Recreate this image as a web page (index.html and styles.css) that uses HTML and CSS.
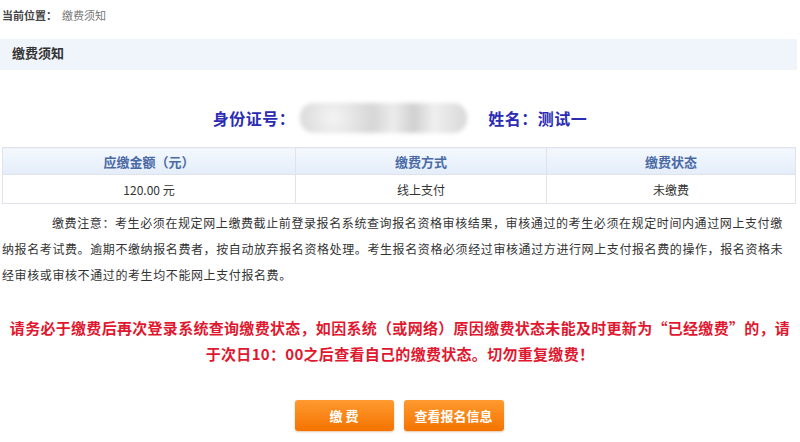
FILE: index.html
```html
<!DOCTYPE html>
<html lang="zh-CN">
<head>
<meta charset="utf-8">
<title>缴费须知</title>
<link rel="stylesheet" href="styles.css">
</head>
<body>
<div class="crumb"><span class="crumb-label">当前位置：</span><span class="crumb-cur">缴费须知</span></div>
<div class="titlebar">缴费须知</div>
<div class="idrow">
  <span class="id-label">身份证号：</span>
  <span class="blur"></span>
  <span class="id-name">姓名：测试一</span>
</div>
<table class="paytable">
  <thead>
    <tr><th class="c1">应缴金额（元）</th><th class="c2">缴费方式</th><th class="c3">缴费状态</th></tr>
  </thead>
  <tbody>
    <tr><td>120.00 元</td><td>线上支付</td><td>未缴费</td></tr>
  </tbody>
</table>
<p class="notice">缴费注意：考生必须在规定网上缴费截止前登录报名系统查询报名资格审核结果，审核通过的考生必须在规定时间内通过网上支付缴纳报名考试费。逾期不缴纳报名费者，按自动放弃报名资格处理。考生报名资格必须经过审核通过方进行网上支付报名费的操作，报名资格未经审核或审核不通过的考生均不能网上支付报名费。</p>
<p class="warn">请务必于缴费后再次登录系统查询缴费状态，如因系统（或网络）原因缴费状态未能及时更新为“已经缴费”的，请于次日10：00之后查看自己的缴费状态。切勿重复缴费！</p>
<div class="actions">
  <button class="btn btn-pay">缴 费</button>
  <button class="btn btn-info">查看报名信息</button>
</div>
</body>
</html>
```

FILE: styles.css
```css
html, body {
  margin: 0;
  padding: 0;
  background: #fff;
}
body {
  width: 800px;
  height: 442px;
  overflow: hidden;
  font-family: "Liberation Sans", "Noto Sans CJK SC", sans-serif;
  color: #333;
}
.crumb {
  height: 32px;
  line-height: 32px;
  padding-left: 2px;
  font-size: 11px;
}
.crumb-label {
  font-weight: bold;
  color: #444;
  margin-right: 5px;
}
.crumb-cur {
  color: #777;
}
.titlebar {
  margin-top: 7px;
  height: 30px;
  line-height: 30px;
  margin-right: 3px;
  background: #f0f5fc;
  padding-left: 12px;
  font-size: 13px;
  font-weight: bold;
  color: #333;
  border-bottom: 1px dotted #f3f3f3;
}
.idrow {
  margin-top: 32px;
  height: 31px;
  display: flex;
  justify-content: center;
  align-items: center;
  font-family: "Noto Sans CJK SC", sans-serif;
  font-size: 16px;
  font-weight: bold;
  color: #2b2bb3;
}
.id-label {
  letter-spacing: 0.5px;
}
.blur {
  display: block;
  width: 167px;
  height: 30px;
  margin: 0 21px 0 5px;
  border-radius: 14px;
  background: radial-gradient(circle at 20% 50%, #f4f4f4 0, #d6d6d6 30%, #ececec 45%, #d0d0d0 60%, #efefef 75%, #d8d8d8 100%);
  filter: blur(2px);
}
.id-name {
  letter-spacing: 0.5px;
}
.paytable {
  margin: 14px 0 0 2px;
  width: 794px;
  border-collapse: collapse;
  font-family: "Noto Sans CJK SC", sans-serif;
  font-size: 12px;
  table-layout: fixed;
}
.paytable th, .paytable td {
  border: 1px solid #e0e4ea;
  text-align: center;
  padding: 0;
}
.paytable th {
  height: 26px;
  font-size: 13px;
  font-weight: bold;
  color: #4a6aa6;
  background: linear-gradient(#f4f8fd, #e4edf9);
}
.paytable td {
  height: 28px;
  color: #333;
}
.c1 { width: 292px; }
.c2 { width: 250px; }
.notice {
  margin: 6px 0 0 2px;
  width: 790px;
  font-family: "Noto Sans CJK SC", sans-serif;
  font-size: 12px;
  letter-spacing: 0.6px;
  line-height: 26px;
  text-indent: 50px;
  color: #333;
}
.warn {
  margin: 27px auto 0;
  width: 790px;
  text-align: center;
  font-family: "Noto Sans CJK SC", sans-serif;
  font-size: 15px;
  letter-spacing: 0.3px;
  line-height: 26px;
  font-weight: bold;
  color: #e0182f;
}
.actions {
  margin-top: 33px;
  display: flex;
  justify-content: center;
  gap: 10px;
  padding-right: 2px;
}
.btn {
  height: 31px;
  border: none;
  border-radius: 3px;
  background: linear-gradient(#ff9a30, #f47300);
  box-shadow: 0 1px 2px rgba(180, 90, 0, 0.35);
  color: #fff;
  font-family: "Noto Sans CJK SC", sans-serif;
  font-size: 13px;
  font-weight: bold;
  padding: 0;
}
.btn-pay { width: 99px; }
.btn-info { width: 100px; }
```
